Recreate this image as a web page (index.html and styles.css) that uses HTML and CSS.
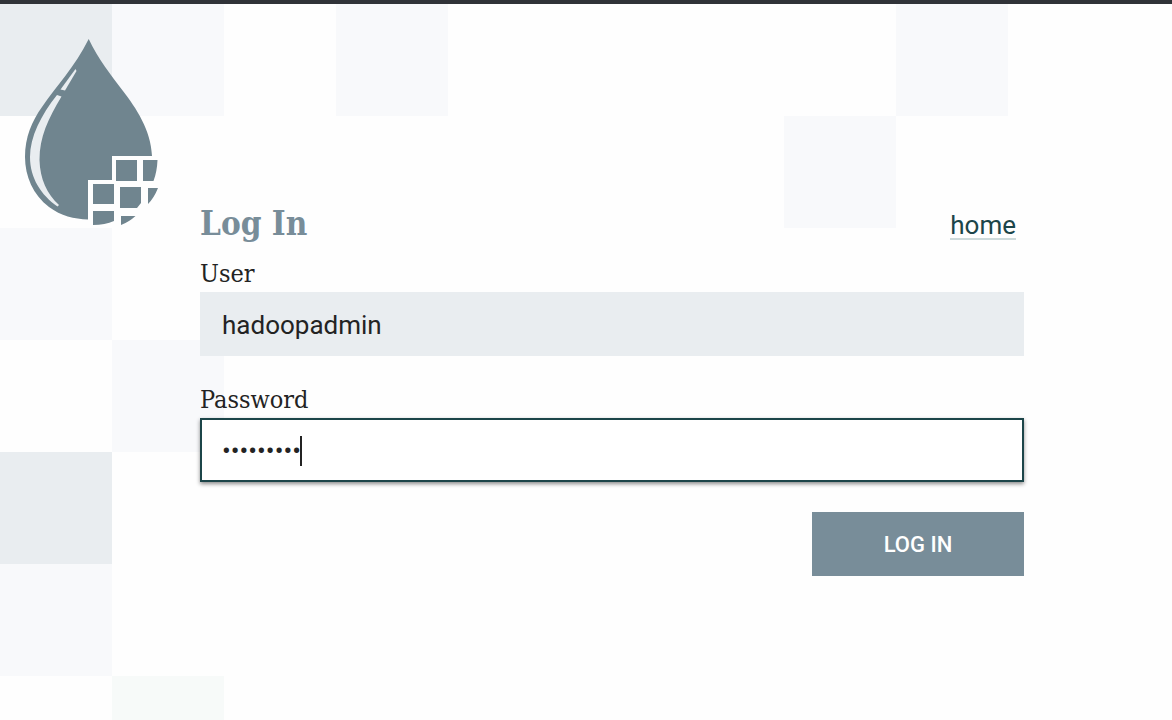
FILE: index.html
```html
<!DOCTYPE html>
<html lang="en">
<head>
<meta charset="utf-8">
<meta name="viewport" content="width=device-width, initial-scale=1">
<title>Log In</title>
<link rel="stylesheet" href="styles.css">
</head>
<body>
<main class="page">
  <div class="brand">
    <svg class="logo" viewBox="20 34 144 196" aria-hidden="true">
      <g class="logo-fill">
        <path d="M88.700 39C98 59 111 75 123 91C136 108 151 130 152 156H112V180H88V219.500C74 219 61 216 49 207C33 195 25 176 25 157C25 137 32 121 42 107C56 86 75 67 88.700 39Z"/>
        <path d="M116 160H137V181H116ZM143 160H157.500Q157 172 153.500 181H143ZM93 184H114V204H93ZM120 187H141V203L137 208H120ZM148 188H158Q154 198 148 204ZM93 211H114V221Q105 225 93 225ZM121 216H135.500Q129 222 121 225Z"/>
      </g>
      <g class="logo-shine">
        <path d="M57 95L61.500 96.500C48 119 39.500 137 39.500 160C40 179 47 194 59 205L57.500 206.500C41 195 30 178 30 157C30 137 41 115 57 95Z"/>
        <path d="M75.500 69L76.500 71L65 90.500L60.500 89.500Z"/>
      </g>
    </svg>
  </div>
  <form class="login" action="#" method="post">
    <header class="login-head">
      <h1 class="title">Log In</h1>
      <a class="home" href="#">home</a>
    </header>
    <div class="field">
      <label class="label" for="user">User</label>
      <input class="input" id="user" name="user" type="text" value="hadoopadmin">
    </div>
    <div class="field">
      <label class="label" for="password">Password</label>
      <div class="control">
        <input class="input input-active" id="password" name="password" type="password" value="admin1234">
        <span class="caret" aria-hidden="true"></span>
      </div>
    </div>
    <button class="submit" type="submit">LOG IN</button>
  </form>
</main>
</body>
</html>
```
FILE: styles.css
```css
:root {
  --tile: 112px;
  --dark: linear-gradient(#e9edf0, #e9edf0);
  --light: linear-gradient(#f8f9fb, #f8f9fb);
  --green: linear-gradient(#f7faf9, #f7faf9);
}

* {
  box-sizing: border-box;
}

body {
  margin: 0;
  min-height: 100vh;
  border-top: 4px solid #303338;
  background-color: #fefefe;
  color: #232323;
  font: 26px/32px Roboto, "Liberation Sans", sans-serif;
}

.page {
  display: flex;
  min-height: calc(100vh - 4px);
  padding-right: 148px;
  background-image: var(--dark), var(--light), var(--light), var(--light), var(--light),
    var(--light), var(--light), var(--dark), var(--light), var(--green);
  background-repeat: no-repeat;
  background-size: var(--tile) var(--tile);
  background-position: 0 0, 112px 0, 336px 0, 896px 0, 784px 112px,
    0 224px, 112px 336px, 0 448px, 0 560px, 112px 672px;
}

.brand {
  flex: 0 0 200px;
  padding: 30px 20px;
}

.logo {
  display: block;
  width: 144px;
  height: 196px;
}

.logo-fill {
  fill: #70858f;
}

.logo-shine {
  fill: #e9edf0;
}

.login {
  display: flex;
  flex: 1;
  flex-direction: column;
  min-width: 0;
  padding-top: 196px;
}

.login-head {
  display: flex;
  align-items: flex-end;
  justify-content: space-between;
  padding-right: 8px;
}

.title {
  margin: 0;
  color: #788d99;
  font: bold 33px/48px "Roboto Slab", "DejaVu Serif Condensed", "DejaVu Serif", serif;
}

.home {
  margin-bottom: 8px;
  border-bottom: 2px solid #cddadb;
  color: #1c4549;
  line-height: 26px;
  text-decoration: none;
}

.field {
  display: flex;
  flex-direction: column;
  gap: 2px;
  margin-bottom: 18px;
  padding-top: 10px;
}

.field + .field {
  margin-bottom: 30px;
}

.label {
  font: 25px/32px "Roboto Slab", "DejaVu Serif Condensed", "DejaVu Serif", serif;
}

.control {
  position: relative;
}

.input {
  display: block;
  width: 100%;
  height: 64px;
  padding: 2px 20px 0;
  border: 2px solid #e9edf0;
  border-radius: 0;
  outline: none;
  background: #e9edf0;
  color: #232323;
  font: inherit;
}

.input-active {
  border-color: #1c4549;
  background: #fff;
  box-shadow: 0 2px 4px rgba(0, 0, 0, 0.45);
}

.caret {
  position: absolute;
  top: 18px;
  left: 100px;
  width: 2px;
  height: 30px;
  background: #232323;
}

.control:focus-within .caret {
  display: none;
}

.submit {
  align-self: flex-end;
  width: 212px;
  height: 64px;
  padding: 2px 0 0;
  border: 0;
  background: #788d99;
  color: #fff;
  font: 500 22px/32px Roboto, "Liberation Sans", sans-serif;
}
```
